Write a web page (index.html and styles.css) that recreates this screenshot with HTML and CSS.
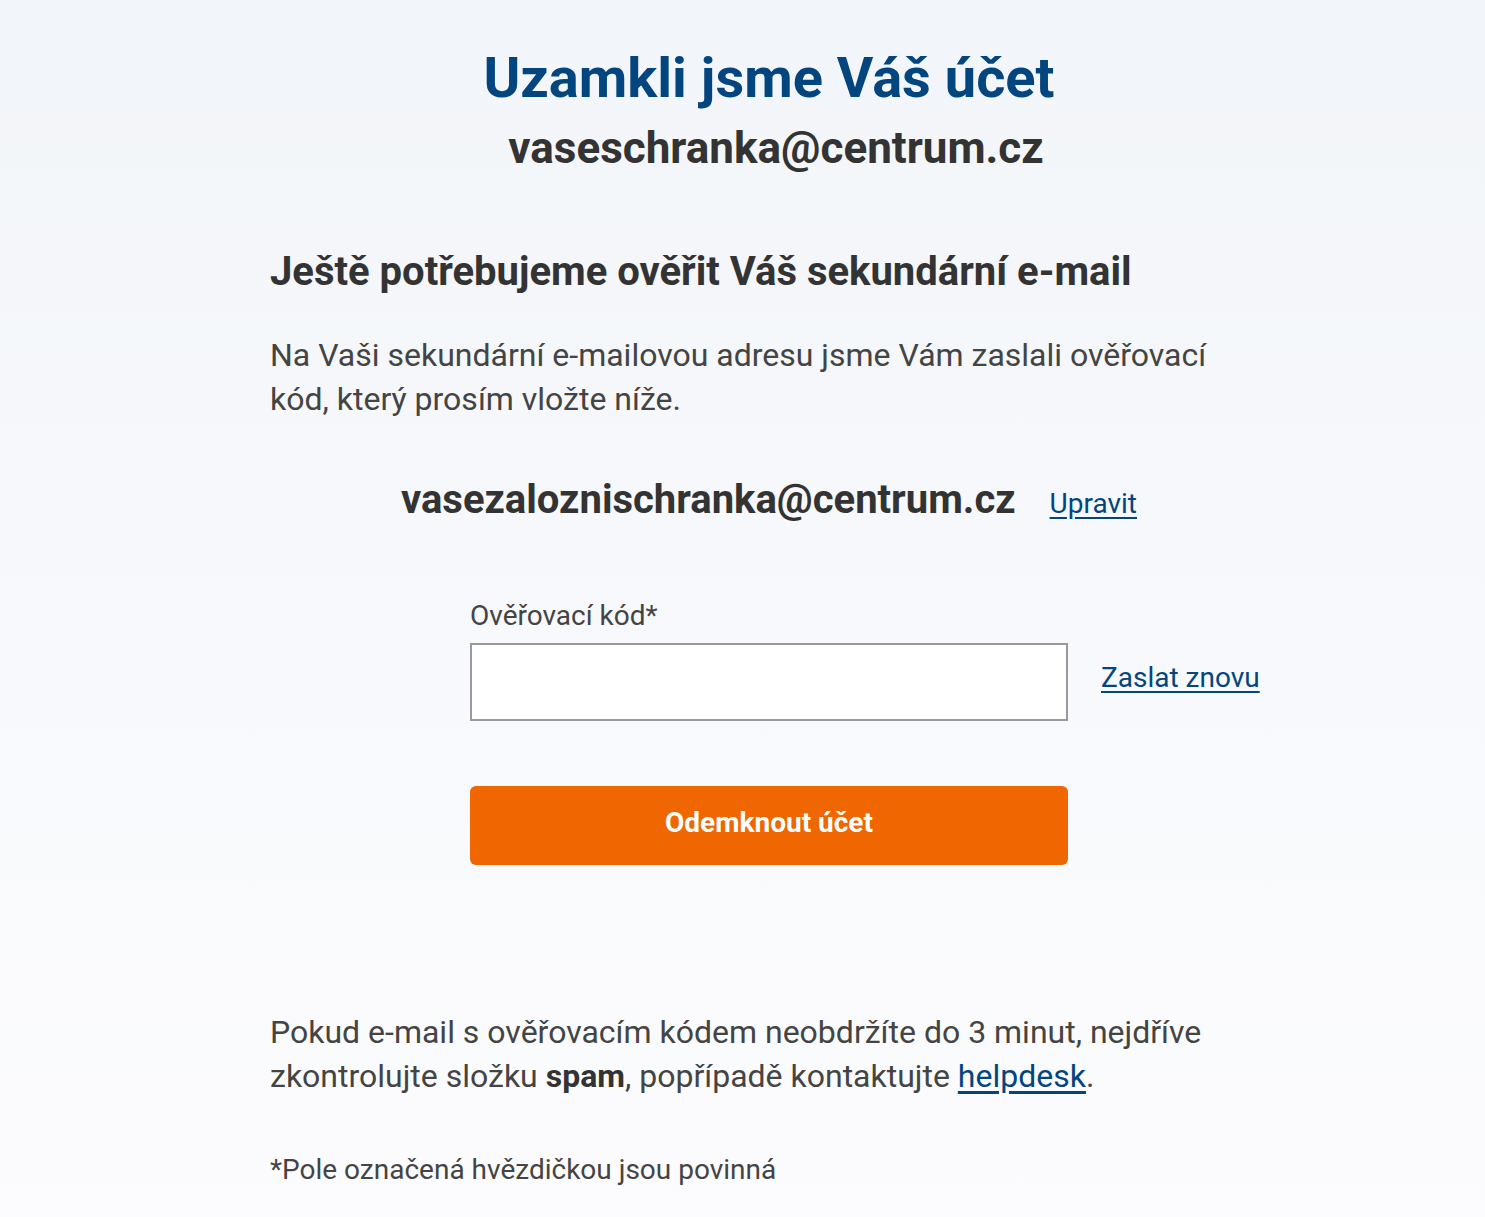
FILE: index.html
```html
<!DOCTYPE html>
<html lang="cs">
<head>
<meta charset="UTF-8">
<meta name="viewport" content="width=device-width, initial-scale=1.0">
<title>Uzamkli jsme Váš účet</title>
<link rel="stylesheet" href="styles.css">
</head>
<body>
    <div class="page">
        <!-- Header -->
        <h1 class="title">Uzamkli jsme Váš účet</h1>
        <p class="account">vaseschranka@centrum.cz</p>

        <!-- Intro -->
        <h2 class="subtitle">Ještě potřebujeme ověřit Váš sekundární e-mail</h2>
        <p class="text">Na Vaši sekundární e-mailovou adresu jsme Vám zaslali ověřovací kód, který prosím vložte níže.</p>

        <div class="backup">
            <span class="backup-email">vasezaloznischranka@centrum.cz</span>
            <a href="#" class="link link-edit">Upravit</a>
        </div>

        <!-- Form -->
        <form class="form">
            <label class="label" for="code">Ověřovací kód*</label>
            <input class="input" id="code" type="text">
            <div class="resend"><a href="#" class="link">Zaslat znovu</a></div>
            <button type="button" class="button">Odemknout účet</button>
        </form>

        <!-- Help -->
        <p class="text help">Pokud e-mail s ověřovacím kódem neobdržíte do 3 minut, nejdříve zkontrolujte složku <strong>spam</strong>, popřípadě kontaktujte <a href="#" class="link">helpdesk</a>.</p>
        <p class="note">*Pole označená hvězdičkou jsou povinná</p>
    </div>
</body>
</html>
```

FILE: styles.css
```css
/* General Styles */
* {
    margin: 0;
    padding: 0;
    box-sizing: border-box;
    font-family: Roboto, 'Liberation Sans', sans-serif;
}

body {
    background: linear-gradient(180deg, #f2f5f9 0%, #fcfcfe 100%);
    color: #333;
    min-height: 100vh;
}

.page {
    width: 998px;
    margin-left: 270px;
    padding-top: 48px;
    padding-bottom: 30px;
}

/* Header */
.title {
    font-size: 56px;
    line-height: 60px;
    font-weight: 700;
    color: #03467f;
    text-align: center;
}

.account {
    margin-top: 15px;
    padding-left: 14px;
    font-size: 44px;
    line-height: 50px;
    font-weight: 700;
    text-align: center;
    color: #333;
}

/* Intro */
.subtitle {
    margin-top: 77px;
    font-size: 40px;
    line-height: 44px;
    font-weight: 700;
    color: #333;
}

.text {
    margin-top: 39px;
    font-size: 32px;
    line-height: 44px;
    color: #444;
    width: 950px;
}

.text strong {
    font-weight: 700;
    color: #333;
}

.link {
    color: #03467f;
    text-decoration: underline;
    text-underline-offset: 4px;
}

.backup {
    margin-top: 57px;
    display: flex;
    justify-content: center;
    align-items: baseline;
    gap: 34px;
}

.backup-email {
    font-size: 40px;
    line-height: 44px;
    font-weight: 700;
    color: #333;
}

.link-edit {
    font-size: 28px;
}

/* Form */
.form {
    margin-top: 78px;
    display: grid;
    grid-template-columns: 1fr 598px 1fr;
}

.label {
    grid-column: 2;
    grid-row: 1;
    font-size: 28px;
    line-height: 32px;
    color: #444;
    margin-bottom: 11px;
}

.input {
    grid-column: 2;
    grid-row: 2;
    height: 78px;
    border: 2px solid #999;
    background: #fff;
    font-size: 28px;
    padding: 0 16px;
    outline: none;
}

.resend {
    grid-column: 3;
    grid-row: 2;
    display: flex;
    align-items: center;
    padding-left: 33px;
    padding-bottom: 10px;
    font-size: 28px;
}

.button {
    grid-column: 2;
    grid-row: 3;
    margin-top: 65px;
    height: 79px;
    padding-bottom: 6px;
    border: none;
    border-radius: 6px;
    background: #f06600;
    color: #fff;
    font-size: 28px;
    font-weight: 700;
    cursor: pointer;
}

/* Help */
.help {
    margin-top: 145px;
}

.note {
    margin-top: 56px;
    font-size: 28px;
    line-height: 32px;
    color: #444;
}
```
